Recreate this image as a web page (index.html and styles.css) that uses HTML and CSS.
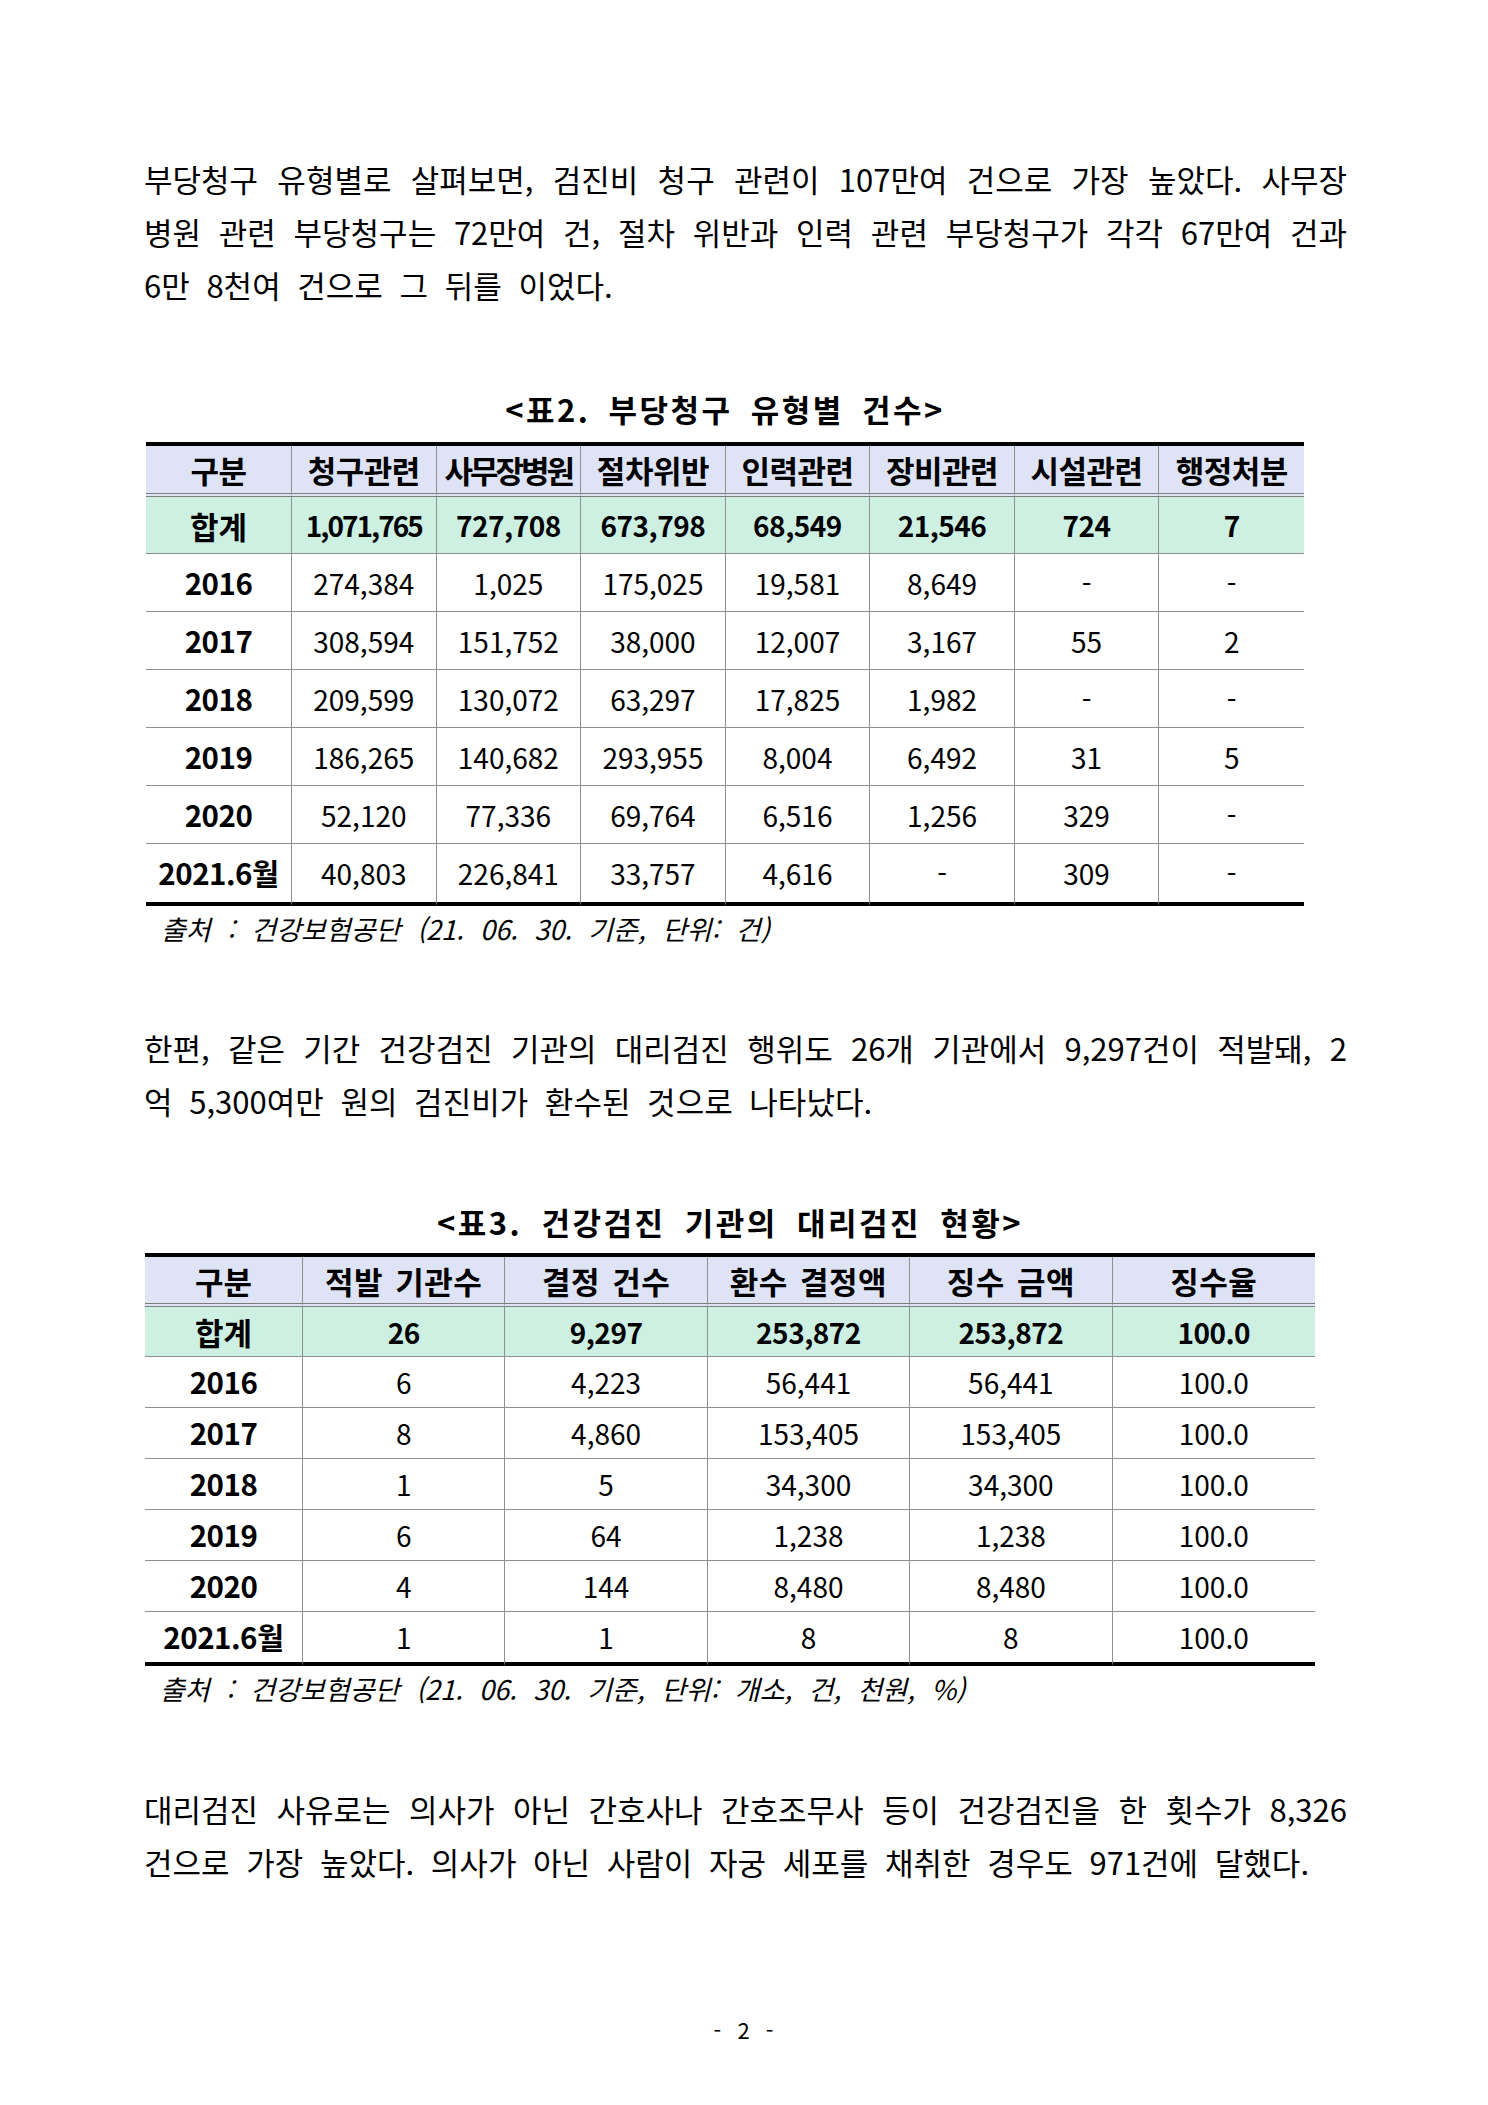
FILE: index.html
```html
<!DOCTYPE html>
<html lang="ko">
<head>
<meta charset="utf-8">
<title>부당청구 현황</title>
<link rel="stylesheet" href="styles.css">
</head>
<body>
<div class="page">
  <div class="para p1">
    <div class="ln j">부당청구 유형별로 살펴보면, 검진비 청구 관련이 107만여 건으로 가장 높았다. 사무장</div>
    <div class="ln j">병원 관련 부당청구는 72만여 건, 절차 위반과 인력 관련 부당청구가 각각 67만여 건과</div>
    <div class="ln">6만 8천여 건으로 그 뒤를 이었다.</div>
  </div>

  <div class="tblock tb2">
    <div class="title">&lt;표2. 부당청구 유형별 건수&gt;</div>
    <table class="tbl">
      <colgroup><col class="c2a"><col><col><col><col><col><col><col></colgroup>
      <thead>
        <tr class="hd"><th>구분</th><th>청구관련</th><th class="tight">사무장병원</th><th>절차위반</th><th>인력관련</th><th>장비관련</th><th>시설관련</th><th>행정처분</th></tr>
      </thead>
      <tbody>
        <tr class="total r57"><td class="lbl">합계</td><td class="nb n1">1,071,765</td><td class="nb">727,708</td><td class="nb">673,798</td><td class="nb">68,549</td><td class="nb">21,546</td><td class="nb">724</td><td class="nb">7</td></tr>
        <tr class="r58"><td class="yr">2016</td><td>274,384</td><td>1,025</td><td>175,025</td><td>19,581</td><td>8,649</td><td>-</td><td>-</td></tr>
        <tr class="r58"><td class="yr">2017</td><td>308,594</td><td>151,752</td><td>38,000</td><td>12,007</td><td>3,167</td><td>55</td><td>2</td></tr>
        <tr class="r58"><td class="yr">2018</td><td>209,599</td><td>130,072</td><td>63,297</td><td>17,825</td><td>1,982</td><td>-</td><td>-</td></tr>
        <tr class="r58"><td class="yr">2019</td><td>186,265</td><td>140,682</td><td>293,955</td><td>8,004</td><td>6,492</td><td>31</td><td>5</td></tr>
        <tr class="r58"><td class="yr">2020</td><td>52,120</td><td>77,336</td><td>69,764</td><td>6,516</td><td>1,256</td><td>329</td><td>-</td></tr>
        <tr class="last r62"><td class="yr">2021.6월</td><td>40,803</td><td>226,841</td><td>33,757</td><td>4,616</td><td>-</td><td>309</td><td>-</td></tr>
      </tbody>
    </table>
    <div class="src">출처 : 건강보험공단 (21. 06. 30. 기준, 단위: 건)</div>
  </div>

  <div class="para p2">
    <div class="ln j">한편, 같은 기간 건강검진 기관의 대리검진 행위도 26개 기관에서 9,297건이 적발돼, 2</div>
    <div class="ln">억 5,300여만 원의 검진비가 환수된 것으로 나타났다.</div>
  </div>

  <div class="tblock tb3">
    <div class="title">&lt;표3. 건강검진 기관의 대리검진 현황&gt;</div>
    <table class="tbl t3">
      <colgroup><col class="c3a"><col><col><col><col><col></colgroup>
      <thead>
        <tr class="hd3"><th>구분</th><th class="sp">적발 기관수</th><th class="sp">결정 건수</th><th class="sp">환수 결정액</th><th class="sp">징수 금액</th><th class="sp">징수율</th></tr>
      </thead>
      <tbody>
        <tr class="total r50"><td class="lbl">합계</td><td class="nb">26</td><td class="nb">9,297</td><td class="nb">253,872</td><td class="nb">253,872</td><td class="nb">100.0</td></tr>
        <tr class="r51"><td class="yr">2016</td><td>6</td><td>4,223</td><td>56,441</td><td>56,441</td><td>100.0</td></tr>
        <tr class="r51"><td class="yr">2017</td><td>8</td><td>4,860</td><td>153,405</td><td>153,405</td><td>100.0</td></tr>
        <tr class="r51"><td class="yr">2018</td><td>1</td><td>5</td><td>34,300</td><td>34,300</td><td>100.0</td></tr>
        <tr class="r51"><td class="yr">2019</td><td>6</td><td>64</td><td>1,238</td><td>1,238</td><td>100.0</td></tr>
        <tr class="r51"><td class="yr">2020</td><td>4</td><td>144</td><td>8,480</td><td>8,480</td><td>100.0</td></tr>
        <tr class="last r54"><td class="yr">2021.6월</td><td>1</td><td>1</td><td>8</td><td>8</td><td>100.0</td></tr>
      </tbody>
    </table>
    <div class="src">출처 : 건강보험공단 (21. 06. 30. 기준, 단위: 개소, 건, 천원, %)</div>
  </div>

  <div class="para p3">
    <div class="ln j">대리검진 사유로는 의사가 아닌 간호사나 간호조무사 등이 건강검진을 한 횟수가 8,326</div>
    <div class="ln">건으로 가장 높았다. 의사가 아닌 사람이 자궁 세포를 채취한 경우도 971건에 달했다.</div>
  </div>

  <div class="pageno">- 2 -</div>
</div>
</body>
</html>
```

FILE: styles.css
```css
html, body {
  margin: 0;
  padding: 0;
  background: #ffffff;
}

body {
  font-family: "Noto Sans CJK KR", "Noto Sans", sans-serif;
  color: #000;
}

.page {
  width: 1203px;
  margin-left: 144px;
  padding-top: 152px;
  padding-bottom: 60px;
}

/* paragraphs */
.para {
  font-size: 31px;
  line-height: 53px;
  letter-spacing: 0;
  word-spacing: 8px;
  white-space: nowrap;
}

.ln {
  height: 53px;
}

.ln.j {
  white-space: normal;
  text-align: justify;
  text-align-last: justify;
}

.p2 { margin-top: 75px; }
.p3 { margin-top: 76px; }

/* table blocks */
.tblock {
  display: flex;
  flex-direction: column;
}

.tb2 {
  width: 1158px;
  margin-left: 2px;
  margin-top: 78px;
}

.tb3 {
  width: 1170px;
  margin-left: 1px;
  margin-top: 75px;
}

.title {
  font-size: 31px;
  line-height: 40px;
  font-weight: 700;
  text-align: center;
  letter-spacing: 2.5px;
  word-spacing: 7px;
  white-space: nowrap;
}

.tb2 .title { margin-bottom: 13px; }
.tb3 .title { margin-bottom: 11px; word-spacing: 8px; }

.tbl {
  width: 100%;
  border-collapse: separate;
  border-spacing: 0;
  table-layout: fixed;
  border-top: 4px solid #000;
}

.c2a { width: 146px; }
.c3a { width: 158px; }

.tbl th,
.tbl td {
  box-sizing: border-box;
  padding: 0;
  border-right: 1px solid #8f8f8f;
  border-bottom: 1px solid #8f8f8f;
  text-align: center;
  vertical-align: middle;
  font-size: 28px;
  line-height: 1;
  white-space: nowrap;
  font-weight: 400;
}

.tbl th:last-child,
.tbl td:last-child {
  border-right: none;
}

.tbl th {
  background: #dee4f6;
  font-weight: 700;
  font-size: 31px;
  border-bottom: 4px double #7c7c7c;
  letter-spacing: -0.5px;
}

.tbl th.tight {
  letter-spacing: -3px;
}

.t3 th {
  letter-spacing: 0;
}

.tbl th.sp {
  letter-spacing: 0.5px;
  word-spacing: 3px;
}

.hd th { height: 51px; }
.hd3 th { height: 50px; }

.total td {
  background: #cdf0e2;
  font-weight: 700;
}

.tbl td.lbl {
  font-size: 31px;
}

.tbl td.nb {
  letter-spacing: -0.5px;
}

.tbl td.n1 {
  letter-spacing: -2px;
}

.tbl td.yr {
  font-weight: 700;
  font-size: 29.5px;
  letter-spacing: -0.5px;
}

.r57 td { height: 57px; }
.r58 td { height: 58px; }
.r62 td { height: 62px; }
.r50 td { height: 50px; }
.r51 td { height: 51px; }
.r54 td { height: 54px; }

.last td {
  border-bottom: 4px solid #000;
}

.src {
  margin-top: 6px;
  padding-left: 15px;
  font-size: 27px;
  line-height: 34px;
  font-style: italic;
  letter-spacing: 0;
  word-spacing: 9px;
  white-space: nowrap;
}

.pageno {
  margin-top: 126px;
  text-align: center;
  font-size: 22px;
  line-height: 30px;
  letter-spacing: 4px;
  word-spacing: 2px;
}
```
